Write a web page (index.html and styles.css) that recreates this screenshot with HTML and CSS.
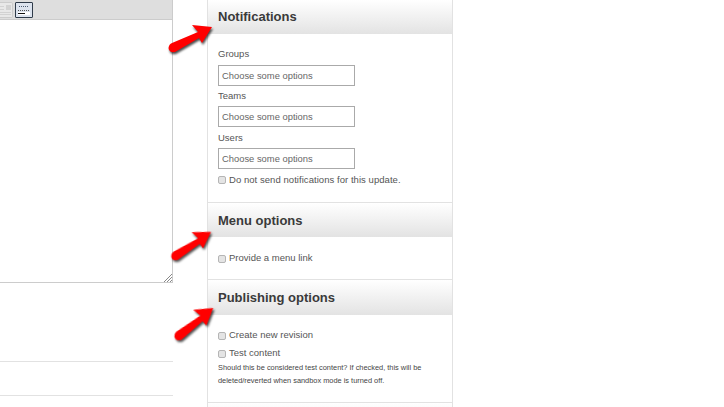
FILE: index.html
```html
<!DOCTYPE html>
<html lang="en">
<head>
  <meta charset="UTF-8">
  <meta name="viewport" content="width=device-width,initial-scale=1.0">
  <title>Node edit sidebar</title>
  <link rel="stylesheet" href="styles.css">
</head>
<body>
  <div class="page">
    <div class="main-col">
      <div class="editor">
        <div class="toolbar">
          <span class="tool-btn tool-off">
            <svg width="12" height="14" viewBox="0 0 12 14"><path d="M0 3.500h4M0 6.500h4M0 9.500h11M0 11.500h11" stroke="#d2d2d2" fill="none"/><rect x="6" y="2" width="5" height="5" fill="#d2d2d2"/></svg>
          </span>
          <span class="tool-btn tool-on">
            <svg width="14" height="12" viewBox="0 0 14 12"><path d="M2 2.500h10" stroke="#4a5a70" stroke-dasharray="1 1" fill="none"/><path d="M1 6.500h12" stroke="#555" stroke-dasharray="1 1" fill="none"/><rect x="1" y="8" width="12" height="3" fill="#fff"/><path d="M1 9.500h7" stroke="#111" fill="none"/></svg>
          </span>
        </div>
        <div class="editor-area">
          <svg class="grip" width="8" height="8" viewBox="0 0 8 8"><path d="M0 8L8 0M3 8L8 3M6 8L8 6" stroke="#888" fill="none"/></svg>
        </div>
      </div>
      <div class="spacer-row"></div>
      <div class="spacer-row short"></div>
    </div>

    <div class="side-col">
      <section class="panel">
        <h2 class="panel-title">Notifications</h2>
        <div class="panel-body notif-body">
          <label class="field-label">Groups</label>
          <input class="chosen chosen-first" type="text" placeholder="Choose some options">
          <label class="field-label">Teams</label>
          <input class="chosen" type="text" placeholder="Choose some options">
          <label class="field-label">Users</label>
          <input class="chosen" type="text" placeholder="Choose some options">
          <label class="check-row"><input type="checkbox"> Do not send notifications for this update.</label>
        </div>
      </section>
      <section class="panel">
        <h2 class="panel-title low">Menu options</h2>
        <div class="panel-body menu-body">
          <label class="check-row"><input type="checkbox"> Provide a menu link</label>
        </div>
      </section>
      <section class="panel">
        <h2 class="panel-title low tall">Publishing options</h2>
        <div class="panel-body pub-body">
          <label class="check-row"><input type="checkbox"> Create new revision</label>
          <label class="check-row"><input type="checkbox"> Test content</label>
          <p class="help">Should this be considered test content? If checked, this will be deleted/reverted when sandbox mode is turned off.</p>
        </div>
      </section>
      <section class="panel">
        <h2 class="panel-title"></h2>
      </section>
    </div>
  </div>

  <!-- annotation arrows drawn over the screenshot -->
  <svg class="arrow arrow-1" width="50" height="34" viewBox="0 0 50 34"><use href="#red-arrow"/></svg>
  <svg class="arrow arrow-2" width="50" height="34" viewBox="0 0 50 34"><use href="#red-arrow"/></svg>
  <svg class="arrow arrow-3" width="50" height="34" viewBox="0 0 50 34"><use href="#red-arrow"/></svg>
  <svg class="defs" width="0" height="0">
    <defs>
      <path id="red-arrow" d="M4 22 L30 11 L24 4 L44 6 L34 22 L31 17 L7 31 Q1 32 0.500 27 Q1 23 4 22Z" fill="#f00"/>
    </defs>
  </svg>
</body>
</html>
```

FILE: styles.css
```css
html, body {
  height: 100%;
}
body {
  margin: 0;
  overflow: hidden;
  background: #fff;
  font-family: "Liberation Sans", Arial, sans-serif;
  color: #555;
}
.page {
  display: flex;
  height: 407px;
  overflow: hidden;
}

/* left column */
.main-col {
  width: 173px;
  margin-right: 34px;
  flex: none;
}
.editor {
  height: 282px;
  display: flex;
  flex-direction: column;
  border-right: 1px solid #ccc;
  border-bottom: 1px solid #ccc;
}
.toolbar {
  height: 17px;
  flex: none;
  display: flex;
  align-items: flex-start;
  justify-content: flex-end;
  gap: 2px;
  padding-top: 2px;
  padding-right: 139px;
  background: #dedede;
  border-bottom: 1px solid #ccc;
}
.tool-btn {
  box-sizing: border-box;
  height: 16px;
  display: flex;
  align-items: center;
  justify-content: center;
  flex: none;
}
.tool-off {
  width: 13px;
  background: #e8e8e8;
  border: 1px solid #ccc;
  border-left: none;
  border-radius: 0 2px 2px 0;
}
.tool-on {
  width: 18px;
  background: #dce3ee;
  border: 1px solid #2f3b4a;
  border-radius: 1px;
}
.editor-area {
  flex: 1;
  position: relative;
}
.grip {
  position: absolute;
  right: 0;
  bottom: 0;
}
.spacer-row {
  height: 78px;
  border-bottom: 1px solid #e2e2e2;
}
.spacer-row.short {
  height: 33px;
}

/* right column */
.side-col {
  width: 244px;
  flex: none;
  border-left: 1px solid #e2e2e2;
  border-right: 1px solid #e2e2e2;
}
.panel {
  border-bottom: 1px solid #e2e2e2;
}
.panel-title {
  margin: 0;
  height: 34px;
  padding-left: 10px;
  font-size: 13px;
  line-height: 34px;
  font-weight: bold;
  color: #3a3a3a;
  background: linear-gradient(#fff, #e3e3e3);
}
.panel-title.low {
  line-height: 36px;
}
.panel-title.tall {
  height: 35px;
}
.panel-body {
  padding-left: 10px;
  font-size: 9.5px;
}
.notif-body {
  padding-top: 9px;
  padding-bottom: 12px;
}
.menu-body {
  padding-top: 12px;
  padding-bottom: 12px;
}
.pub-body {
  padding-top: 11px;
  padding-bottom: 15px;
}
.field-label {
  display: block;
  height: 21px;
  line-height: 21px;
}
.chosen {
  display: block;
  box-sizing: border-box;
  width: 137px;
  height: 21px;
  margin: 0;
  padding: 0 3px;
  border: 1px solid #aaa;
  outline: none;
  background: #fff;
  font-family: inherit;
  font-size: 9.4px;
}
.chosen-first {
  margin-top: 1px;
  margin-bottom: -1px;
}
.chosen::placeholder {
  color: #666;
  opacity: 1;
}
.notif-body .check-row {
  height: 21px;
  letter-spacing: 0.05px;
}
.check-row {
  display: flex;
  align-items: center;
  gap: 3px;
  height: 18px;
  line-height: 18px;
}
.check-row input {
  width: 6px;
  height: 6px;
  margin: 1px 0 0;
  appearance: none;
  background: #e4e4e4;
  border: 1px solid #b5b5b5;
  border-radius: 2px;
  box-sizing: content-box;
}
.help {
  margin: -1px 0 0;
  width: 210px;
  font-size: 7.4px;
  line-height: 13px;
  color: #444;
}

/* arrows lie over the page */
.arrow {
  position: absolute;
  overflow: visible;
  filter: drop-shadow(1.5px 2px 1px rgba(0, 0, 0, 0.7));
  transform-origin: 44px 5px;
}
.arrow-1 {
  left: 168px;
  top: 21px;
}
.arrow-2 {
  left: 167px;
  top: 226px;
  transform: rotate(-6deg) scale(0.97);
}
.arrow-3 {
  left: 169px;
  top: 302px;
  transform: rotate(-11deg);
}
.defs {
  position: absolute;
}
```
